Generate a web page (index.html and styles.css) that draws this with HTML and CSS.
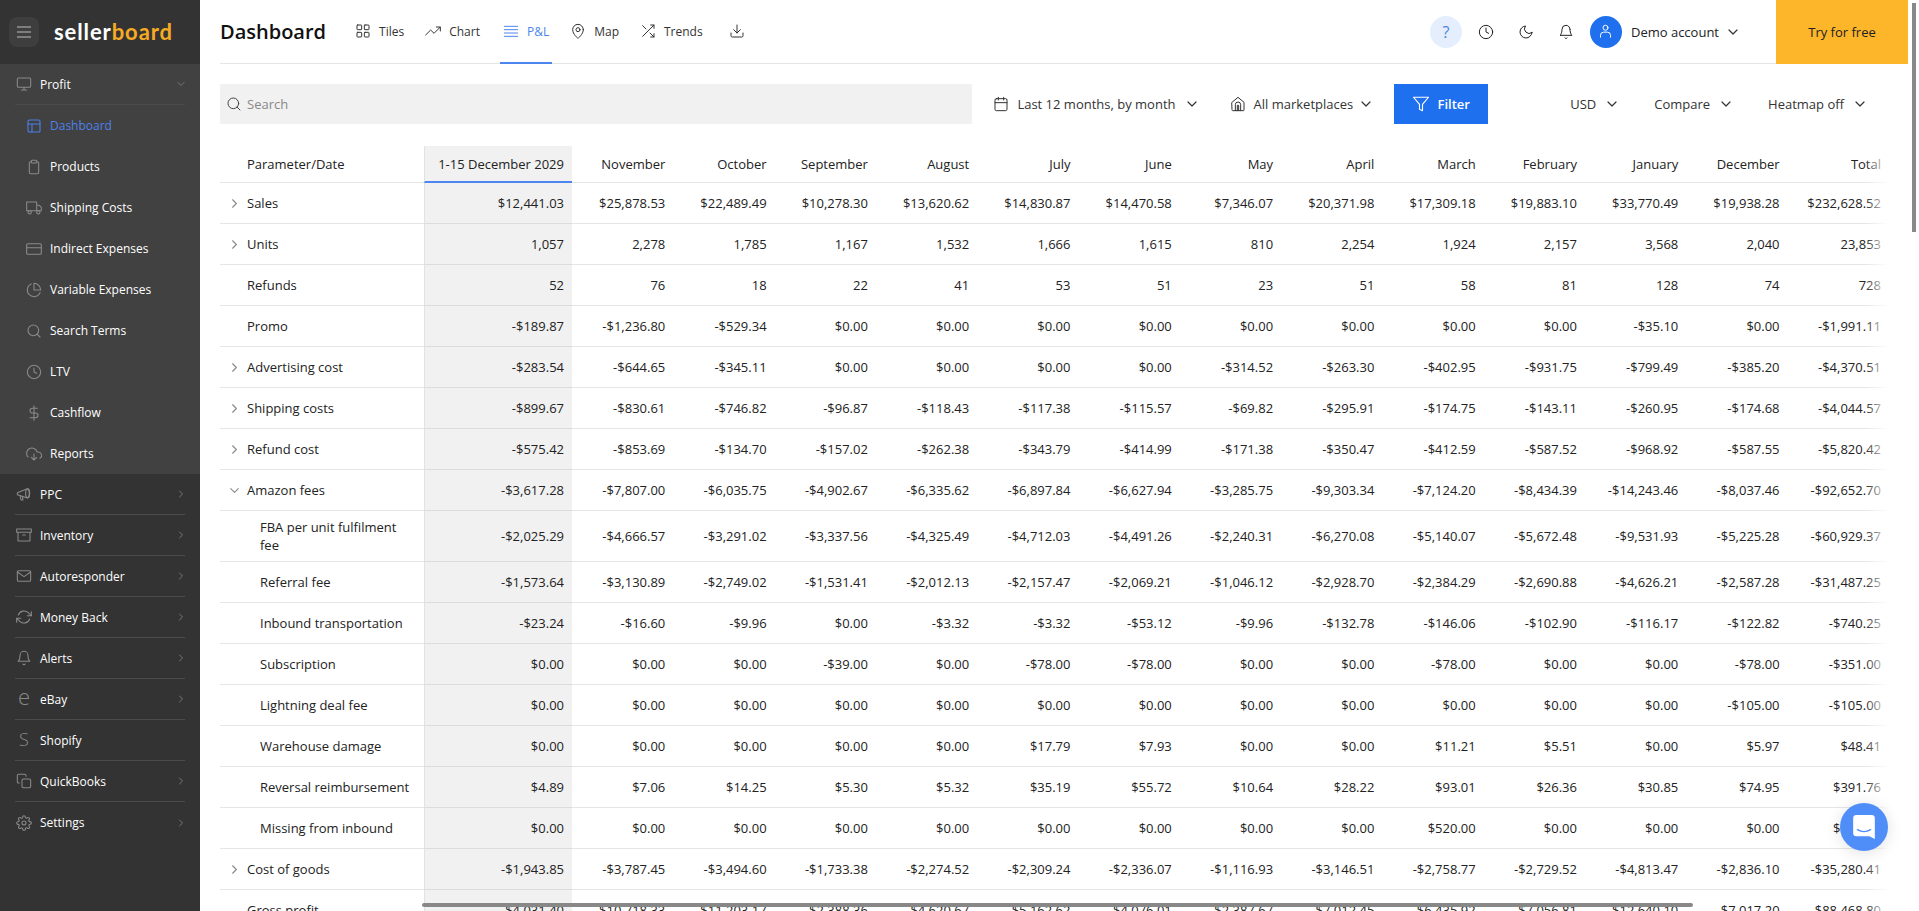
FILE: index.html
```html
<!DOCTYPE html>
<html lang="en">
<head>
    <meta charset="UTF-8">
    <meta name="viewport" content="width=device-width, initial-scale=1.0">
    <title>Dashboard - sellerboard</title>
    <link rel="stylesheet" href="styles.css">
</head>
<body>
    <svg class="sprite" xmlns="http://www.w3.org/2000/svg">
        <symbol id="i-monitor" viewBox="0 0 24 24"><rect x="2" y="3" width="20" height="14" rx="2"/><path d="M8 21h8M12 17v4"/></symbol>
        <symbol id="i-layout" viewBox="0 0 24 24"><rect x="3" y="3" width="18" height="18" rx="2"/><path d="M3 9h18M9 21V9"/></symbol>
        <symbol id="i-clipboard" viewBox="0 0 24 24"><path d="M16 4h1a2 2 0 0 1 2 2v14a2 2 0 0 1-2 2H7a2 2 0 0 1-2-2V6a2 2 0 0 1 2-2h1"/><rect x="8" y="2" width="8" height="4" rx="1"/></symbol>
        <symbol id="i-truck" viewBox="0 0 24 24"><path d="M1 3h15v13H1zM16 8h4l3 3v5h-7z"/><circle cx="5.5" cy="18.5" r="2.5"/><circle cx="18.5" cy="18.5" r="2.5"/></symbol>
        <symbol id="i-card" viewBox="0 0 24 24"><rect x="1" y="4" width="22" height="16" rx="2"/><path d="M1 10h22"/></symbol>
        <symbol id="i-pie" viewBox="0 0 24 24"><path d="M21.2 15.9A10 10 0 1 1 8 2.8"/><path d="M22 12A10 10 0 0 0 12 2v10z"/></symbol>
        <symbol id="i-search" viewBox="0 0 24 24"><circle cx="11" cy="11" r="8"/><path d="M21 21l-4.35-4.35"/></symbol>
        <symbol id="i-clock" viewBox="0 0 24 24"><circle cx="12" cy="12" r="10"/><path d="M12 6v6l4 2"/></symbol>
        <symbol id="i-dollar" viewBox="0 0 24 24"><path d="M12 1v22M17 5H9.500a3.500 3.500 0 0 0 0 7h5a3.500 3.500 0 0 1 0 7H6"/></symbol>
        <symbol id="i-cloud" viewBox="0 0 24 24"><path d="M8 17l4 4 4-4M12 12v9"/><path d="M20.900 18.300A5 5 0 0 0 18 9h-1.300A8 8 0 1 0 3 16.300"/></symbol>
        <symbol id="i-megaphone" viewBox="0 0 24 24"><path d="M2 10l15-6c2 1 3 4 3 7s-1 6-3 7L2 13z"/><ellipse cx="17.500" cy="11" rx="3" ry="7"/><path d="M6 14l1.500 7h3l-1-5.500"/></symbol>
        <symbol id="i-archive" viewBox="0 0 24 24"><path d="M21 8v13H3V8M1 3h22v5H1zM10 12h4"/></symbol>
        <symbol id="i-mail" viewBox="0 0 24 24"><path d="M4 4h16a2 2 0 0 1 2 2v12a2 2 0 0 1-2 2H4a2 2 0 0 1-2-2V6a2 2 0 0 1 2-2z"/><path d="M22 6l-10 7L2 6"/></symbol>
        <symbol id="i-refresh" viewBox="0 0 24 24"><path d="M23 4v6h-6M1 20v-6h6"/><path d="M3.500 9a9 9 0 0 1 14.900-3.400L23 10M1 14l4.600 4.400A9 9 0 0 0 20.500 15"/></symbol>
        <symbol id="i-bell" viewBox="0 0 24 24"><path d="M18 8A6 6 0 0 0 6 8c0 7-3 9-3 9h18s-3-2-3-9"/><path d="M13.700 21a2 2 0 0 1-3.400 0"/></symbol>
        <symbol id="i-copy" viewBox="0 0 24 24"><rect x="9" y="9" width="13" height="13" rx="2"/><path d="M5 15H4a2 2 0 0 1-2-2V4a2 2 0 0 1 2-2h9a2 2 0 0 1 2 2v1"/></symbol>
        <symbol id="i-gear" viewBox="0 0 24 24"><circle cx="12" cy="12" r="3"/><path d="M19.400 15a1.650 1.650 0 0 0 .33 1.820l.06.06a2 2 0 1 1-2.830 2.830l-.06-.06a1.650 1.650 0 0 0-2.820 1.170V21a2 2 0 0 1-4 0v-.09A1.650 1.650 0 0 0 7.260 19.700l-.06.06a2 2 0 1 1-2.830-2.830l.06-.06a1.650 1.650 0 0 0-1.170-2.820H3a2 2 0 0 1 0-4h.09A1.650 1.650 0 0 0 4.300 7.260l-.06-.06a2 2 0 1 1 2.830-2.830l.06.06a1.650 1.650 0 0 0 2.820-1.170V3a2 2 0 0 1 4 0v.09a1.650 1.650 0 0 0 2.790 1.170l.06-.06a2 2 0 1 1 2.830 2.830l-.06.06a1.650 1.650 0 0 0 1.170 2.820H21a2 2 0 0 1 0 4h-.09a1.650 1.650 0 0 0-1.510 1z"/></symbol>
        <symbol id="i-grid" viewBox="0 0 24 24"><rect x="3" y="3" width="7" height="7" rx="1"/><rect x="14" y="3" width="7" height="7" rx="1"/><rect x="14" y="14" width="7" height="7" rx="1"/><rect x="3" y="14" width="7" height="7" rx="1"/></symbol>
        <symbol id="i-trend" viewBox="0 0 24 24"><path d="M1 18l7.500-7.500 5 5L23 6M17 6h6v6"/></symbol>
        <symbol id="i-lines" viewBox="0 0 24 24"><path d="M2 5h20M2 10h20M2 15h20M2 20h20"/></symbol>
        <symbol id="i-pin" viewBox="0 0 24 24"><path d="M20 10c0 7-8 13-8 13s-8-6-8-13a8 8 0 0 1 16 0z"/><circle cx="12" cy="10" r="3"/></symbol>
        <symbol id="i-shuffle" viewBox="0 0 24 24"><path d="M16 3h5v5M4 20L21 3M21 16v5h-5M15 15l6 6M4 4l5 5"/></symbol>
        <symbol id="i-download" viewBox="0 0 24 24"><path d="M21 15v4a2 2 0 0 1-2 2H5a2 2 0 0 1-2-2v-4M7 10l5 5 5-5M12 15V3"/></symbol>
        <symbol id="i-calendar" viewBox="0 0 24 24"><rect x="3" y="4" width="18" height="18" rx="2"/><path d="M16 2v4M8 2v4M3 10h18"/></symbol>
        <symbol id="i-home" viewBox="0 0 24 24"><path d="M3 9.500L12 2l9 7.500V21a1 1 0 0 1-1 1H4a1 1 0 0 1-1-1z"/><path d="M8 22V13a4 4 0 0 1 8 0v9M11 22v-8h2v8"/></symbol>
        <symbol id="i-filter" viewBox="0 0 24 24"><path d="M22 3H2l8 9.500V19l4 2v-8.500z"/></symbol>
        <symbol id="i-moon" viewBox="0 0 24 24"><path d="M21 12.800A9 9 0 1 1 11.200 3 7 7 0 0 0 21 12.800z"/></symbol>
        <symbol id="i-user" viewBox="0 0 24 24"><path d="M4 21v-3a5 5 0 0 1 5-5h6a5 5 0 0 1 5 5v3"/><circle cx="12" cy="6" r="4"/></symbol>
        <symbol id="i-down" viewBox="0 0 24 24"><path d="M6 9l6 6 6-6"/></symbol>
        <symbol id="i-right" viewBox="0 0 24 24"><path d="M9 18l6-6-6-6"/></symbol>
    </svg>

    <div class="app">
        <aside class="sidebar">
            <div class="brand">
                <div class="burger"><span></span><span></span><span></span></div>
                <div class="logo">seller<span class="logo-accent">board</span></div>
            </div>
            <div class="group-open">
                <div class="nav-item">
                    <svg class="nav-icon"><use href="#i-monitor"/></svg>
                    <span class="nav-label">Profit</span>
                    <svg class="nav-arrow"><use href="#i-down"/></svg>
                </div>
                <div class="sub-item active"><svg class="nav-icon"><use href="#i-layout"/></svg>Dashboard</div>
                <div class="sub-item"><svg class="nav-icon"><use href="#i-clipboard"/></svg>Products</div>
                <div class="sub-item"><svg class="nav-icon"><use href="#i-truck"/></svg>Shipping Costs</div>
                <div class="sub-item"><svg class="nav-icon"><use href="#i-card"/></svg>Indirect Expenses</div>
                <div class="sub-item"><svg class="nav-icon"><use href="#i-pie"/></svg>Variable Expenses</div>
                <div class="sub-item"><svg class="nav-icon"><use href="#i-search"/></svg>Search Terms</div>
                <div class="sub-item"><svg class="nav-icon"><use href="#i-clock"/></svg>LTV</div>
                <div class="sub-item"><svg class="nav-icon"><use href="#i-dollar"/></svg>Cashflow</div>
                <div class="sub-item"><svg class="nav-icon"><use href="#i-cloud"/></svg>Reports</div>
            </div>
            <div class="nav-item"><svg class="nav-icon"><use href="#i-megaphone"/></svg><span class="nav-label">PPC</span><svg class="nav-arrow"><use href="#i-right"/></svg></div>
            <div class="nav-item"><svg class="nav-icon"><use href="#i-archive"/></svg><span class="nav-label">Inventory</span><svg class="nav-arrow"><use href="#i-right"/></svg></div>
            <div class="nav-item"><svg class="nav-icon"><use href="#i-mail"/></svg><span class="nav-label">Autoresponder</span><svg class="nav-arrow"><use href="#i-right"/></svg></div>
            <div class="nav-item"><svg class="nav-icon"><use href="#i-refresh"/></svg><span class="nav-label">Money Back</span><svg class="nav-arrow"><use href="#i-right"/></svg></div>
            <div class="nav-item"><svg class="nav-icon"><use href="#i-bell"/></svg><span class="nav-label">Alerts</span><svg class="nav-arrow"><use href="#i-right"/></svg></div>
            <div class="nav-item"><span class="nav-letter">e</span><span class="nav-label">eBay</span><svg class="nav-arrow"><use href="#i-right"/></svg></div>
            <div class="nav-item"><span class="nav-letter nav-letter-s">S</span><span class="nav-label">Shopify</span></div>
            <div class="nav-item"><svg class="nav-icon"><use href="#i-copy"/></svg><span class="nav-label">QuickBooks</span><svg class="nav-arrow"><use href="#i-right"/></svg></div>
            <div class="nav-item nav-last"><svg class="nav-icon"><use href="#i-gear"/></svg><span class="nav-label">Settings</span><svg class="nav-arrow"><use href="#i-right"/></svg></div>
        </aside>

        <main class="main">
            <header class="topbar">
                <h1 class="title">Dashboard</h1>
                <nav class="tabs">
                    <div class="tab"><svg class="tab-icon"><use href="#i-grid"/></svg>Tiles</div>
                    <div class="tab"><svg class="tab-icon"><use href="#i-trend"/></svg>Chart</div>
                    <div class="tab tab-active"><svg class="tab-icon"><use href="#i-lines"/></svg>P&amp;L</div>
                    <div class="tab"><svg class="tab-icon"><use href="#i-pin"/></svg>Map</div>
                    <div class="tab"><svg class="tab-icon"><use href="#i-shuffle"/></svg>Trends</div>
                    <div class="tab tab-download"><svg class="tab-icon"><use href="#i-download"/></svg></div>
                </nav>
                <div class="top-right">
                    <div class="round-btn help">?</div>
                    <div class="round-btn"><svg class="tab-icon"><use href="#i-clock"/></svg></div>
                    <div class="round-btn"><svg class="tab-icon"><use href="#i-moon"/></svg></div>
                    <div class="round-btn"><svg class="tab-icon"><use href="#i-bell"/></svg></div>
                    <div class="account">
                        <div class="avatar"><svg class="avatar-icon"><use href="#i-user"/></svg></div>
                        <span>Demo account</span>
                        <svg class="chev"><use href="#i-down"/></svg>
                    </div>
                    <div class="try-btn">Try for free</div>
                </div>
            </header>

            <div class="filters">
                <div class="search"><svg class="tab-icon"><use href="#i-search"/></svg><span>Search</span></div>
                <div class="drop drop-date"><svg class="tab-icon"><use href="#i-calendar"/></svg><span>Last 12 months, by month</span><svg class="chev"><use href="#i-down"/></svg></div>
                <div class="drop drop-market"><svg class="tab-icon"><use href="#i-home"/></svg><span>All marketplaces</span><svg class="chev"><use href="#i-down"/></svg></div>
                <div class="filter-btn"><svg class="tab-icon"><use href="#i-filter"/></svg>Filter</div>
                <div class="drop"><span>USD</span><svg class="chev"><use href="#i-down"/></svg></div>
                <div class="drop drop-compare"><span>Compare</span><svg class="chev"><use href="#i-down"/></svg></div>
                <div class="drop drop-compare"><span>Heatmap off</span><svg class="chev"><use href="#i-down"/></svg></div>
            </div>

            <div class="table-wrap">
                <table class="pl-table">
                    <colgroup>
                        <col class="col-param"><col class="col-current">
                        <col><col><col><col><col><col><col><col><col><col><col><col><col>
                    </colgroup>
                    <thead>
                        <tr>
                            <th class="param">Parameter/Date</th>
                            <th class="current">1-15 December 2029</th>
                            <th>November</th><th>October</th><th>September</th><th>August</th><th>July</th><th>June</th><th>May</th><th>April</th><th>March</th><th>February</th><th>January</th><th>December</th><th>Total</th>
                        </tr>
                    </thead>
                    <tbody>
                        <tr>
                            <td class="param arrow"><svg class="tree"><use href="#i-right"/></svg>Sales</td>
                            <td class="current">$12,441.03</td><td>$25,878.53</td><td>$22,489.49</td><td>$10,278.30</td><td>$13,620.62</td><td>$14,830.87</td><td>$14,470.58</td><td>$7,346.07</td><td>$20,371.98</td><td>$17,309.18</td><td>$19,883.10</td><td>$33,770.49</td><td>$19,938.28</td><td>$232,628.52</td>
                        </tr>
                        <tr>
                            <td class="param arrow"><svg class="tree"><use href="#i-right"/></svg>Units</td>
                            <td class="current">1,057</td><td>2,278</td><td>1,785</td><td>1,167</td><td>1,532</td><td>1,666</td><td>1,615</td><td>810</td><td>2,254</td><td>1,924</td><td>2,157</td><td>3,568</td><td>2,040</td><td>23,853</td>
                        </tr>
                        <tr>
                            <td class="param">Refunds</td>
                            <td class="current">52</td><td>76</td><td>18</td><td>22</td><td>41</td><td>53</td><td>51</td><td>23</td><td>51</td><td>58</td><td>81</td><td>128</td><td>74</td><td>728</td>
                        </tr>
                        <tr>
                            <td class="param">Promo</td>
                            <td class="current">-$189.87</td><td>-$1,236.80</td><td>-$529.34</td><td>$0.00</td><td>$0.00</td><td>$0.00</td><td>$0.00</td><td>$0.00</td><td>$0.00</td><td>$0.00</td><td>$0.00</td><td>-$35.10</td><td>$0.00</td><td>-$1,991.11</td>
                        </tr>
                        <tr>
                            <td class="param arrow"><svg class="tree"><use href="#i-right"/></svg>Advertising cost</td>
                            <td class="current">-$283.54</td><td>-$644.65</td><td>-$345.11</td><td>$0.00</td><td>$0.00</td><td>$0.00</td><td>$0.00</td><td>-$314.52</td><td>-$263.30</td><td>-$402.95</td><td>-$931.75</td><td>-$799.49</td><td>-$385.20</td><td>-$4,370.51</td>
                        </tr>
                        <tr>
                            <td class="param arrow"><svg class="tree"><use href="#i-right"/></svg>Shipping costs</td>
                            <td class="current">-$899.67</td><td>-$830.61</td><td>-$746.82</td><td>-$96.87</td><td>-$118.43</td><td>-$117.38</td><td>-$115.57</td><td>-$69.82</td><td>-$295.91</td><td>-$174.75</td><td>-$143.11</td><td>-$260.95</td><td>-$174.68</td><td>-$4,044.57</td>
                        </tr>
                        <tr>
                            <td class="param arrow"><svg class="tree"><use href="#i-right"/></svg>Refund cost</td>
                            <td class="current">-$575.42</td><td>-$853.69</td><td>-$134.70</td><td>-$157.02</td><td>-$262.38</td><td>-$343.79</td><td>-$414.99</td><td>-$171.38</td><td>-$350.47</td><td>-$412.59</td><td>-$587.52</td><td>-$968.92</td><td>-$587.55</td><td>-$5,820.42</td>
                        </tr>
                        <tr>
                            <td class="param arrow"><svg class="tree"><use href="#i-down"/></svg>Amazon fees</td>
                            <td class="current">-$3,617.28</td><td>-$7,807.00</td><td>-$6,035.75</td><td>-$4,902.67</td><td>-$6,335.62</td><td>-$6,897.84</td><td>-$6,627.94</td><td>-$3,285.75</td><td>-$9,303.34</td><td>-$7,124.20</td><td>-$8,434.39</td><td>-$14,243.46</td><td>-$8,037.46</td><td>-$92,652.70</td>
                        </tr>
                        <tr>
                            <td class="param sub wrap">FBA per unit fulfilment fee</td>
                            <td class="current">-$2,025.29</td><td>-$4,666.57</td><td>-$3,291.02</td><td>-$3,337.56</td><td>-$4,325.49</td><td>-$4,712.03</td><td>-$4,491.26</td><td>-$2,240.31</td><td>-$6,270.08</td><td>-$5,140.07</td><td>-$5,672.48</td><td>-$9,531.93</td><td>-$5,225.28</td><td>-$60,929.37</td>
                        </tr>
                        <tr>
                            <td class="param sub">Referral fee</td>
                            <td class="current">-$1,573.64</td><td>-$3,130.89</td><td>-$2,749.02</td><td>-$1,531.41</td><td>-$2,012.13</td><td>-$2,157.47</td><td>-$2,069.21</td><td>-$1,046.12</td><td>-$2,928.70</td><td>-$2,384.29</td><td>-$2,690.88</td><td>-$4,626.21</td><td>-$2,587.28</td><td>-$31,487.25</td>
                        </tr>
                        <tr>
                            <td class="param sub">Inbound transportation</td>
                            <td class="current">-$23.24</td><td>-$16.60</td><td>-$9.96</td><td>$0.00</td><td>-$3.32</td><td>-$3.32</td><td>-$53.12</td><td>-$9.96</td><td>-$132.78</td><td>-$146.06</td><td>-$102.90</td><td>-$116.17</td><td>-$122.82</td><td>-$740.25</td>
                        </tr>
                        <tr>
                            <td class="param sub">Subscription</td>
                            <td class="current">$0.00</td><td>$0.00</td><td>$0.00</td><td>-$39.00</td><td>$0.00</td><td>-$78.00</td><td>-$78.00</td><td>$0.00</td><td>$0.00</td><td>-$78.00</td><td>$0.00</td><td>$0.00</td><td>-$78.00</td><td>-$351.00</td>
                        </tr>
                        <tr>
                            <td class="param sub">Lightning deal fee</td>
                            <td class="current">$0.00</td><td>$0.00</td><td>$0.00</td><td>$0.00</td><td>$0.00</td><td>$0.00</td><td>$0.00</td><td>$0.00</td><td>$0.00</td><td>$0.00</td><td>$0.00</td><td>$0.00</td><td>-$105.00</td><td>-$105.00</td>
                        </tr>
                        <tr>
                            <td class="param sub">Warehouse damage</td>
                            <td class="current">$0.00</td><td>$0.00</td><td>$0.00</td><td>$0.00</td><td>$0.00</td><td>$17.79</td><td>$7.93</td><td>$0.00</td><td>$0.00</td><td>$11.21</td><td>$5.51</td><td>$0.00</td><td>$5.97</td><td>$48.41</td>
                        </tr>
                        <tr>
                            <td class="param sub">Reversal reimbursement</td>
                            <td class="current">$4.89</td><td>$7.06</td><td>$14.25</td><td>$5.30</td><td>$5.32</td><td>$35.19</td><td>$55.72</td><td>$10.64</td><td>$28.22</td><td>$93.01</td><td>$26.36</td><td>$30.85</td><td>$74.95</td><td>$391.76</td>
                        </tr>
                        <tr>
                            <td class="param sub">Missing from inbound</td>
                            <td class="current">$0.00</td><td>$0.00</td><td>$0.00</td><td>$0.00</td><td>$0.00</td><td>$0.00</td><td>$0.00</td><td>$0.00</td><td>$0.00</td><td>$520.00</td><td>$0.00</td><td>$0.00</td><td>$0.00</td><td>$520.00</td>
                        </tr>
                        <tr>
                            <td class="param arrow"><svg class="tree"><use href="#i-right"/></svg>Cost of goods</td>
                            <td class="current">-$1,943.85</td><td>-$3,787.45</td><td>-$3,494.60</td><td>-$1,733.38</td><td>-$2,274.52</td><td>-$2,309.24</td><td>-$2,336.07</td><td>-$1,116.93</td><td>-$3,146.51</td><td>-$2,758.77</td><td>-$2,729.52</td><td>-$4,813.47</td><td>-$2,836.10</td><td>-$35,280.41</td>
                        </tr>
                        <tr>
                            <td class="param">Gross profit</td>
                            <td class="current">$4,031.40</td><td>$10,718.33</td><td>$11,203.17</td><td>$2,388.36</td><td>$4,620.67</td><td>$5,162.62</td><td>$4,076.01</td><td>$2,387.67</td><td>$7,012.45</td><td>$6,435.92</td><td>$7,056.81</td><td>$12,640.10</td><td>$7,017.20</td><td>$88,468.80</td>
                        </tr>
                    </tbody>
                </table>
                <div class="table-fade"></div>
            </div>
        </main>
    </div>

    <div class="hscroll"></div>
    <div class="vscroll"></div>
    <div class="chat">
        <svg class="chat-icon" viewBox="0 0 24 24">
            <path class="chat-bubble" d="M5 1h14a3 3 0 0 1 3 3v19l-5-2.500H5a3 3 0 0 1-3-3V4a3 3 0 0 1 3-3z"/>
            <path class="chat-smile" d="M6 14.500c3.500 2.200 8.500 2.200 12 0"/>
        </svg>
    </div>
</body>
</html>
```

FILE: styles.css
```css
* {
    box-sizing: border-box;
}
html, body {
    margin: 0;
    height: 100%;
    overflow: hidden;
}
body {
    font-family: "Open Sans", "Noto Sans", sans-serif;
    font-size: 13px;
    color: #222;
    background-color: #fff;
}
svg {
    fill: none;
    stroke: currentColor;
    stroke-width: 1.7;
    stroke-linecap: round;
    stroke-linejoin: round;
    flex-shrink: 0;
}
.sprite {
    display: none;
}
.app {
    display: flex;
    height: 911px;
}

/* sidebar */
.sidebar {
    width: 200px;
    flex-shrink: 0;
    background-color: #333;
    color: #fff;
    font-size: 12px;
}
.brand {
    height: 64px;
    display: flex;
    align-items: center;
    padding-left: 9px;
}
.burger {
    width: 30px;
    height: 30px;
    border-radius: 8px;
    background-color: #3e3e3e;
    display: flex;
    flex-direction: column;
    align-items: center;
    justify-content: center;
    gap: 3px;
}
.burger span {
    width: 14px;
    height: 2px;
    background-color: #7d7d7d;
}
.logo {
    margin-left: 15px;
    font-family: "Lato", sans-serif;
    font-weight: 700;
    font-size: 22px;
    letter-spacing: 0.9px;
    line-height: 1;
}
.logo-accent {
    color: #f5ab23;
}
.group-open {
    background-color: #414141;
    height: 410px;
}
.nav-item {
    height: 41px;
    margin: 0 15px;
    display: flex;
    align-items: center;
    border-bottom: 1px solid #4b4b4b;
    padding-left: 1px;
}
.nav-last {
    border-bottom: none;
}
.nav-icon {
    width: 16px;
    height: 16px;
    color: #8a8a8a;
    stroke-width: 1.6;
}
.nav-label {
    margin-left: 8px;
    flex: 1;
}
.nav-arrow {
    width: 12px;
    height: 12px;
    color: #777;
    margin-right: -2px;
    stroke-width: 2;
}
.nav-letter {
    width: 16px;
    text-align: center;
    color: #8a8a8a;
    font-weight: 300;
    font-size: 22px;
    line-height: 22px;
    margin-top: -6px;
}
.nav-letter-s {
    font-size: 18px;
    margin-top: -2px;
}
.sub-item {
    height: 41px;
    display: flex;
    align-items: center;
    gap: 8px;
    padding-left: 26px;
}
.sub-item.active {
    color: #4d80ea;
}
.sub-item.active .nav-icon {
    color: #4d80ea;
}

/* top bar */
.main {
    flex: 1;
    min-width: 0;
    padding-left: 20px;
    padding-right: 11px;
    overflow: hidden;
}
.topbar {
    height: 64px;
    display: flex;
    align-items: center;
    border-bottom: 1px solid #e6e6e6;
}
.title {
    margin: 0 26px 0 0;
    font-size: 20px;
    font-weight: 600;
    color: #111;
}
.tabs {
    display: flex;
    gap: 15px;
    height: 100%;
    font-size: 12px;
}
.tab {
    display: flex;
    align-items: center;
    gap: 8px;
    padding: 0 3px;
    margin-bottom: -1px;
    border-bottom: 2px solid transparent;
    color: #333;
}
.tab-active {
    margin-left: 2px;
    color: #4d86ee;
    border-bottom-color: #4d86ee;
}
.tab-download {
    margin-left: 5px;
}
.tab-icon {
    width: 16px;
    height: 16px;
    stroke-width: 1.5;
}
.top-right {
    margin-left: auto;
    display: flex;
    align-items: center;
    gap: 8px;
    height: 100%;
}
.round-btn {
    width: 32px;
    height: 32px;
    border-radius: 50%;
    display: flex;
    align-items: center;
    justify-content: center;
}
.help {
    background-color: #e4eefc;
    color: #4a86ea;
    font-size: 16px;
}
.account {
    display: flex;
    align-items: center;
    gap: 9px;
    margin-right: 35px;
    color: #222;
}
.account .chev {
    margin-left: -3px;
}
.avatar {
    width: 32px;
    height: 32px;
    border-radius: 50%;
    background-color: #1f70ef;
    color: #fff;
    display: flex;
    align-items: center;
    justify-content: center;
}
.avatar-icon {
    width: 15px;
    height: 15px;
    stroke-width: 1.6;
}
.chev {
    width: 16px;
    height: 16px;
    stroke-width: 1.8;
    color: #333;
}
.try-btn {
    width: 132px;
    height: 64px;
    margin-left: -8px;
    background-color: #fdb52a;
    display: flex;
    align-items: center;
    justify-content: center;
}

/* filter row */
.filters {
    display: flex;
    align-items: center;
    height: 40px;
    margin-top: 20px;
    margin-right: 40px;
    color: #333;
}
.search {
    flex: 1;
    height: 40px;
    background-color: #f1f1f1;
    display: flex;
    align-items: center;
    gap: 5px;
    padding-left: 6px;
    color: #888;
}
.search .tab-icon {
    color: #444;
}
.drop {
    display: flex;
    align-items: center;
    gap: 8px;
}
.drop-date {
    margin-left: 21px;
}
.drop-market {
    margin-left: 30px;
}
.drop-market .chev {
    margin-left: -3px;
}
.filter-btn {
    width: 94px;
    height: 40px;
    margin-left: 20px;
    margin-right: 82px;
    background-color: #1f70ef;
    color: #fff;
    font-weight: 600;
    display: flex;
    align-items: center;
    justify-content: center;
    gap: 7px;
}
.filter-btn .tab-icon {
    width: 18px;
    height: 18px;
}
.drop-compare {
    margin-left: 34px;
}

/* table */
.table-wrap {
    position: relative;
    margin-top: 22px;
    margin-right: 19px;
}
.pl-table {
    width: 100%;
    table-layout: fixed;
    border-collapse: separate;
    border-spacing: 0;
}
.col-param {
    width: 204px;
}
.col-current {
    width: 148px;
}
.pl-table th,
.pl-table td {
    padding: 0 8px;
    text-align: right;
    font-weight: 400;
    white-space: nowrap;
    border-bottom: 1px solid #e6e6e6;
    line-height: 18px;
}
.pl-table th {
    height: 37px;
}
.pl-table td {
    height: 41px;
}
.pl-table .param {
    text-align: left;
    padding-left: 27px;
    padding-right: 0;
}
.pl-table .param.arrow {
    padding-left: 7px;
}
.pl-table .param.sub {
    padding-left: 40px;
}
.pl-table .param.wrap {
    white-space: normal;
    padding-right: 8px;
    padding-top: 7px;
    padding-bottom: 7px;
    height: 51px;
}
.tree {
    width: 15px;
    height: 15px;
    color: #888;
    margin-right: 5px;
    vertical-align: -3px;
    stroke-width: 1.7;
}
.pl-table .current {
    background-color: #f1f1f1;
    border-left: 1px solid #e2e2e2;
    border-bottom-color: #dcdcdc;
}
.pl-table th.current {
    border-bottom: 2px solid #4d86ee;
    padding-top: 1px;
}

/* overlays */
.table-fade {
    position: absolute;
    top: 0;
    right: 0;
    bottom: 0;
    width: 24px;
    background: linear-gradient(to right, rgba(255, 255, 255, 0), #fff);
    pointer-events: none;
}
.hscroll {
    position: absolute;
    left: 422px;
    top: 903px;
    width: 1271px;
    height: 4px;
    border-radius: 2px;
    background-color: #888;
}
.vscroll {
    position: absolute;
    left: 1912px;
    top: 3px;
    width: 4px;
    height: 229px;
    background-color: #888;
}
.chat {
    position: absolute;
    left: 1840px;
    top: 803px;
    width: 48px;
    height: 48px;
    border-radius: 50%;
    background-color: #4f8ef8;
    box-shadow: 0 2px 16px rgba(0, 0, 0, 0.12);
    display: flex;
    align-items: center;
    justify-content: center;
}
.chat-icon {
    width: 26px;
    height: 26px;
}
.chat-bubble {
    fill: #fff;
    stroke: none;
}
.chat-smile {
    stroke: #4f8ef8;
    stroke-width: 1.4;
}
```
